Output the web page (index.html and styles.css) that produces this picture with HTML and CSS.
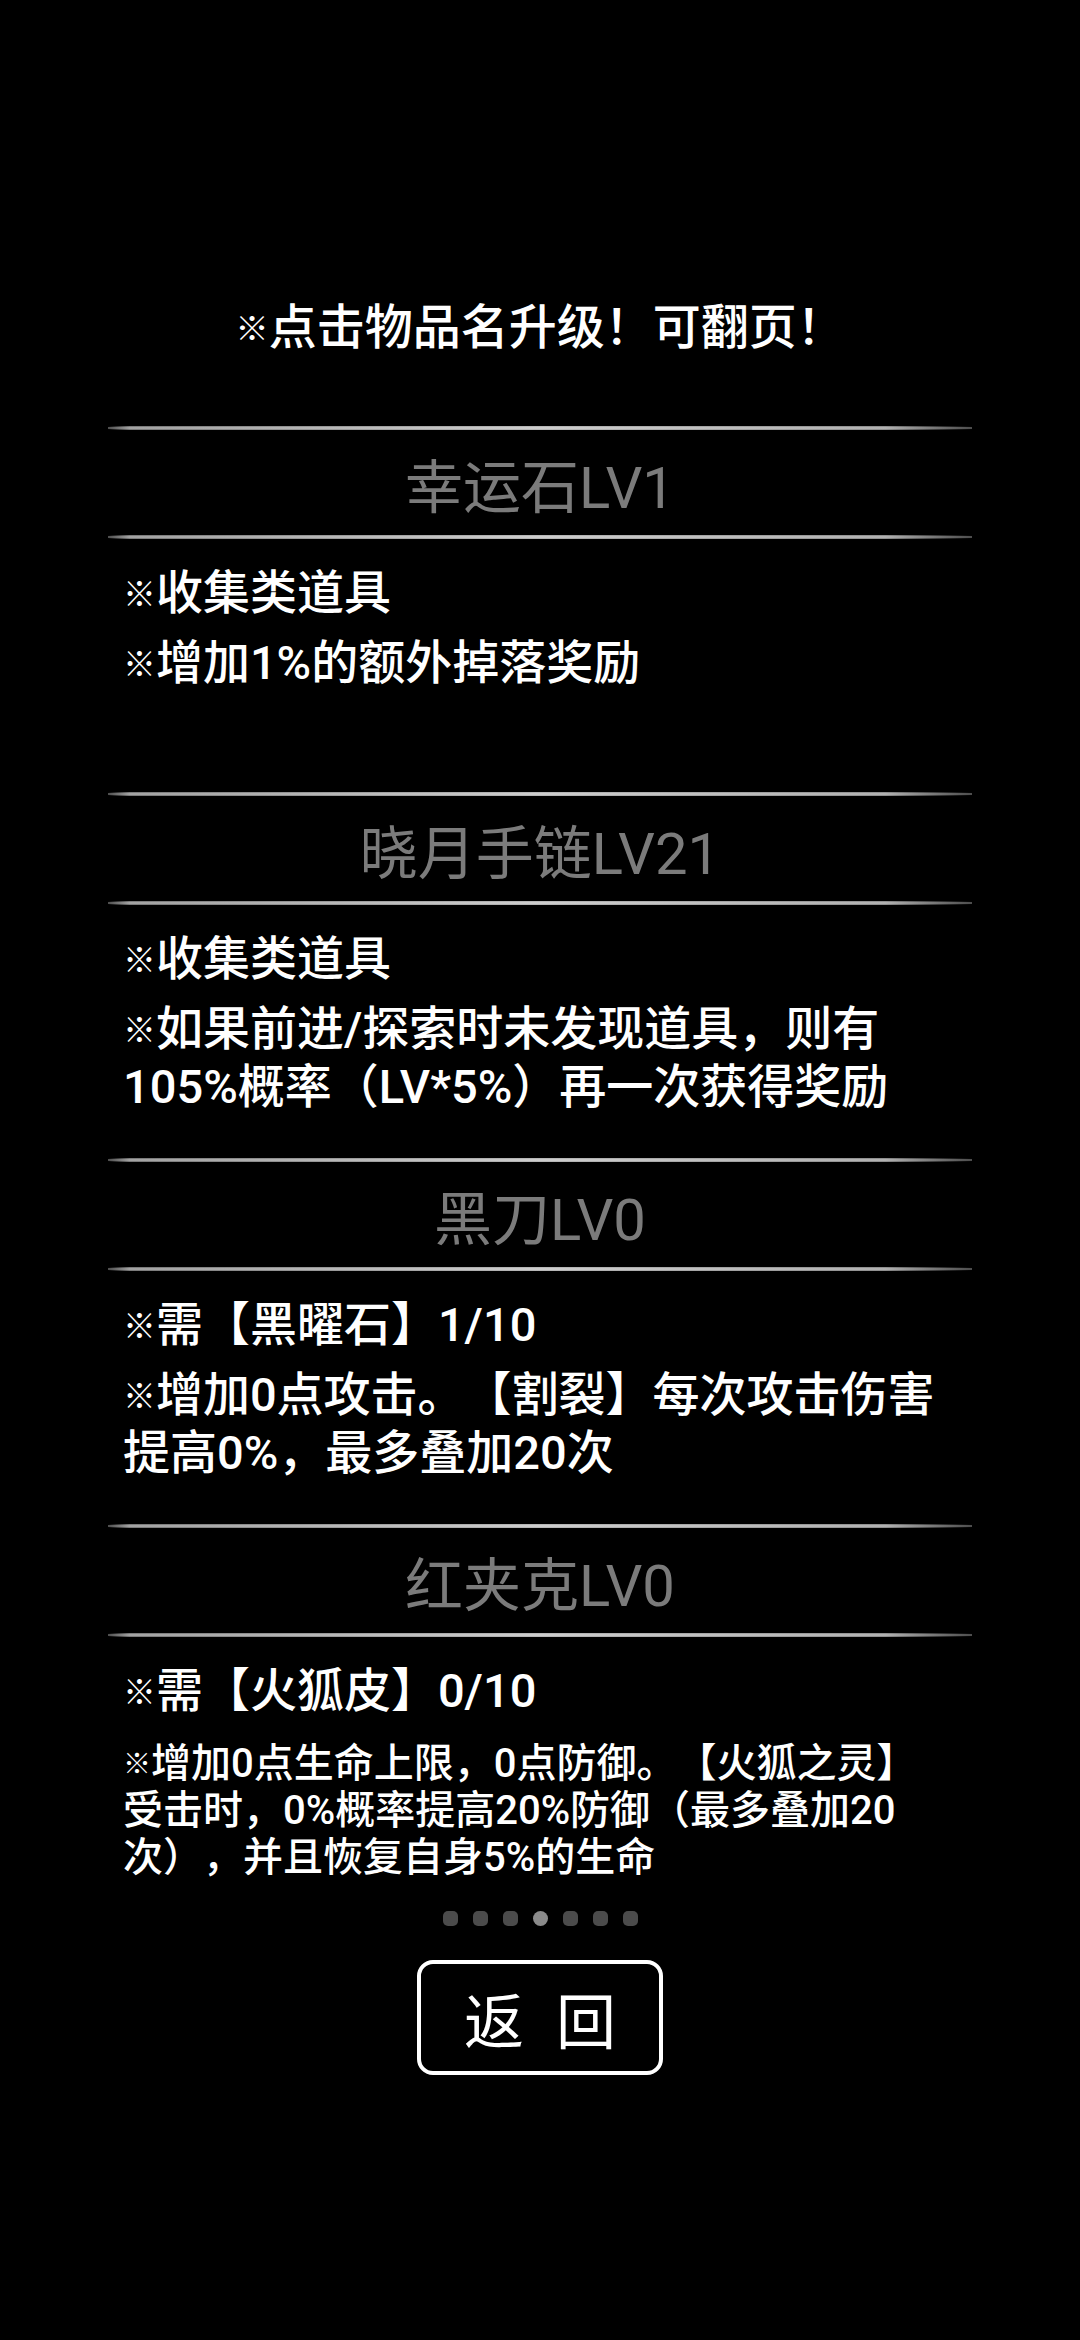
FILE: index.html
```html
<!DOCTYPE html>
<html lang="zh-CN">

<head>
  <meta charset="UTF-8">
  <meta name="viewport" content="width=device-width, initial-scale=1.0">
  <title>道具升级</title>
  <link rel="stylesheet" href="styles.css">
</head>

<body>

  <div class="page">
    <p class="tip"><span class="mark">※</span>点击物品名升级！可翻页！</p>

    <!-- Item pages -->
    <div class="items">
      <section class="item">
        <div class="item-head">
          <div class="rule"></div>
          <h2 class="item-name">幸运石LV1</h2>
          <div class="rule"></div>
        </div>
        <div class="item-body">
          <p><span class="mark">※</span>收集类道具</p>
          <p><span class="mark">※</span>增加1%的额外掉落奖励</p>
        </div>
      </section>

      <section class="item">
        <div class="item-head">
          <div class="rule"></div>
          <h2 class="item-name">晓月手链LV21</h2>
          <div class="rule"></div>
        </div>
        <div class="item-body">
          <p><span class="mark">※</span>收集类道具</p>
          <p><span class="mark">※</span>如果前进/探索时未发现道具，则有<br>105%概率（LV*5%）再一次获得奖励</p>
        </div>
      </section>

      <section class="item">
        <div class="item-head">
          <div class="rule"></div>
          <h2 class="item-name">黑刀LV0</h2>
          <div class="rule"></div>
        </div>
        <div class="item-body">
          <p><span class="mark">※</span>需【黑曜石】1/10</p>
          <p><span class="mark">※</span>增加0点攻击。【割裂】每次攻击伤害<br>提高0%，最多叠加20次</p>
        </div>
      </section>

      <section class="item">
        <div class="item-head">
          <div class="rule"></div>
          <h2 class="item-name">红夹克LV0</h2>
          <div class="rule"></div>
        </div>
        <div class="item-body">
          <p><span class="mark">※</span>需【火狐皮】0/10</p>
          <p class="small"><span class="mark">※</span>增加0点生命上限，0点防御。【火狐之灵】<br>受击时，0%概率提高20%防御（最多叠加20<br>次），并且恢复自身5%的生命</p>
        </div>
      </section>
    </div>

    <!-- Pager -->
    <div class="dots">
      <span class="dot"></span>
      <span class="dot"></span>
      <span class="dot"></span>
      <span class="dot active"></span>
      <span class="dot"></span>
      <span class="dot"></span>
      <span class="dot"></span>
    </div>

    <button class="back-button"><span>返</span><span>回</span></button>
  </div>

</body>

</html>
```

FILE: styles.css
```css
/* Global Styles */
body,
html {
  margin: 0;
  padding: 0;
  background-color: #000;
  color: #fff;
  font-family: Roboto, 'Noto Sans CJK SC', sans-serif;
  text-spacing-trim: space-all;
}

.page {
  width: 1080px;
  height: 2340px;
  display: flex;
  flex-direction: column;
  align-items: center;
  padding-top: 298px;
  box-sizing: border-box;
}

.tip {
  margin: 0 0 68px;
  font-size: 48px;
  line-height: 60px;
  font-weight: 500;
  text-align: center;
}

.mark {
  font-size: 0.7em;
  line-height: 0;
  vertical-align: 0.1em;
}

/* Item Styles */
.items {
  width: 100%;
  display: flex;
  flex-direction: column;
}

.item {
  height: 366px;
  display: flex;
  flex-direction: column;
}

.item-head {
  display: flex;
  flex-direction: column;
}

.rule {
  height: 4px;
  margin: 0 108px;
  background:
    linear-gradient(to bottom, transparent 25%, rgba(255, 255, 255, 0.3) 25%, rgba(255, 255, 255, 0.3) 75%, transparent 75%),
    linear-gradient(to right, transparent 0%, #7a7a7a 2.5%, #b8b8b8 50%, #8f8f8f 90%, transparent 100%);
}

.item-name {
  height: 105px;
  margin: 0;
  display: flex;
  justify-content: center;
  align-items: center;
  font-size: 58px;
  font-weight: 400;
  color: #7b7b7b;
}

.item-body {
  padding: 25px 0 0 123px;
}

.item-body p {
  margin: 0 0 12px;
  font-size: 47px;
  line-height: 58px;
  font-weight: 500;
}

.item-body p.small {
  padding-top: 8px;
  font-size: 40px;
  line-height: 47px;
}

/* Pager Styles */
.dots {
  display: flex;
  gap: 15px;
  margin-top: 21px;
}

.dot {
  width: 15px;
  height: 15px;
  border-radius: 5px;
  background-color: #4b4b4b;
}

.dot.active {
  border-radius: 50%;
  background-color: #8a8a8a;
}

/* Button Styles */
.back-button {
  margin-top: 34px;
  width: 246px;
  height: 115px;
  display: flex;
  justify-content: center;
  align-items: center;
  gap: 32px;
  background-color: #000;
  color: #fff;
  border: 4px solid #fff;
  border-radius: 16px;
  font-family: 'Noto Sans CJK SC', sans-serif;
  font-size: 60px;
  cursor: pointer;
}
```
